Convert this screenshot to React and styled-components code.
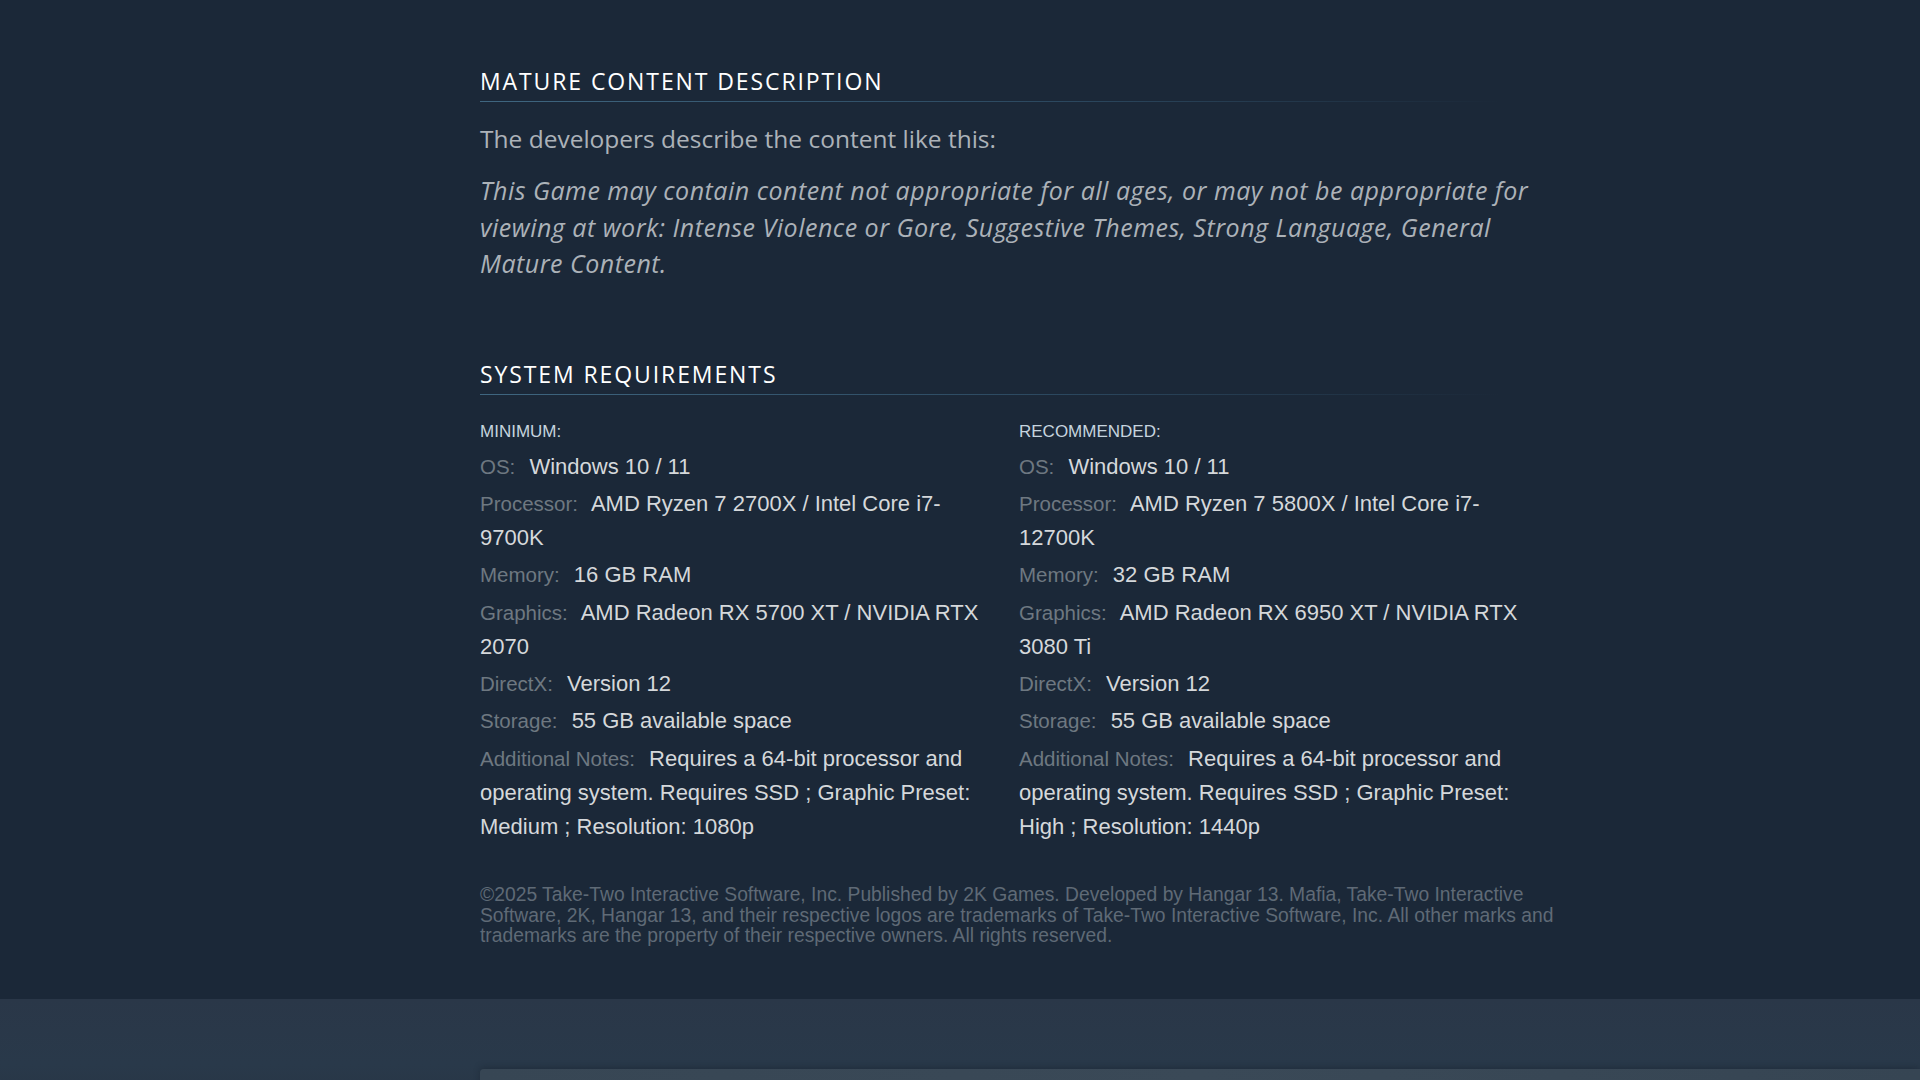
import React from 'react';
import styled, { createGlobalStyle } from 'styled-components';

const GlobalStyle = createGlobalStyle`
	html, body {
		margin: 0;
		padding: 0;
		background: #1b2838;
	}
	body {
		font-family: 'Open Sans', 'Liberation Sans', sans-serif;
	}
`;

// 페이지 전체
const Page = styled.div`
	min-height: 1080px;
	display: flex;
	flex-direction: column;
	background: #1b2838;
	overflow: hidden;
`;

// 본문 컬럼
const Column = styled.div`
	width: 1075px;
	padding: 66px 0 0 480px;
`;

const Section = styled.section`
	margin-bottom: ${(p) => p.$gap || 0}px;
`;

// 섹션 제목 + 그래디언트 밑줄
const SectionTitle = styled.h2`
	margin: 0;
	font-family: 'Open Sans', sans-serif;
	font-weight: 400;
	font-size: 23px;
	line-height: 30px;
	letter-spacing: 1.9px;
	text-transform: uppercase;
	color: #ffffff;
	padding-bottom: 6px;
	position: relative;

	&::after {
		content: '';
		position: absolute;
		left: 0;
		right: 0;
		bottom: 0;
		height: 1px;
		background: linear-gradient(to right, #3f6680 0%, #2b475e 55%, rgba(43, 71, 94, 0) 95%);
	}
`;

const Intro = styled.p`
	margin: 19px 0 0;
	font-size: 24.5px;
	line-height: 36px;
	color: #acb2b8;
`;

const Description = styled.p`
	margin: 15px 0 0;
	font-size: 25px;
	font-style: italic;
	letter-spacing: 0.5px;
	line-height: 36.5px;
	color: #acb2b8;
`;

// 사양 2단 그리드
const ReqGrid = styled.div`
	display: grid;
	grid-template-columns: 510px 510px;
	column-gap: 29px;
	margin-top: 26px;
`;

const ReqTitle = styled.div`
	font-family: 'Liberation Sans', Arial, sans-serif;
	font-size: 17px;
	line-height: 22px;
	text-transform: uppercase;
	color: #c6d4df;
	margin-bottom: 7px;
`;

const ReqList = styled.ul`
	list-style: none;
	margin: 0;
	padding: 0;
`;

const ReqItem = styled.li`
	font-family: 'Liberation Sans', Arial, sans-serif;
	font-size: 22px;
	line-height: 34.25px;
	margin-bottom: 3px;
`;

const ReqLabel = styled.span`
	font-size: 20.5px;
	color: #6e7881;
	margin-right: 8px;
`;

const ReqValue = styled.span`
	color: #d5d8db;
`;

const Copyright = styled.div`
	margin-top: 38px;
	font-family: 'Liberation Sans', Arial, sans-serif;
	font-size: 19.3px;
	line-height: 20.5px;
	color: #5f6a76;
`;

// 하단 흐린 영역
const BottomBand = styled.div`
	margin-top: 52px;
	flex: 1;
	background: linear-gradient(to bottom, #2a3748 0%, #29394a 60%, #273443 100%);
	padding: 70px 0 0 480px;
`;

const BandCard = styled.div`
	height: 40px;
	border-radius: 4px 0 0 0;
	background: linear-gradient(to right, #374654, #3a4957 50%, #364553);
	box-shadow: 0 -2px 6px rgba(20, 30, 40, 0.35);
`;

const minimum = [
	['OS:', 'Windows 10 / 11'],
	['Processor:', 'AMD Ryzen 7 2700X / Intel Core i7-9700K'],
	['Memory:', '16 GB RAM'],
	['Graphics:', 'AMD Radeon RX 5700 XT / NVIDIA RTX 2070'],
	['DirectX:', 'Version 12'],
	['Storage:', '55 GB available space'],
	[
		'Additional Notes:',
		'Requires a 64-bit processor and operating system. Requires SSD ; Graphic Preset: Medium ; Resolution: 1080p',
	],
];

const recommended = [
	['OS:', 'Windows 10 / 11'],
	['Processor:', 'AMD Ryzen 7 5800X / Intel Core i7-12700K'],
	['Memory:', '32 GB RAM'],
	['Graphics:', 'AMD Radeon RX 6950 XT / NVIDIA RTX 3080 Ti'],
	['DirectX:', 'Version 12'],
	['Storage:', '55 GB available space'],
	[
		'Additional Notes:',
		'Requires a 64-bit processor and operating system. Requires SSD ; Graphic Preset: High ; Resolution: 1440p',
	],
];

const ReqColumn = ({ title, rows }) => (
	<div>
		<ReqTitle>{title}</ReqTitle>
		<ReqList>
			{rows.map(([label, value]) => (
				<ReqItem key={label}>
					<ReqLabel>{label}</ReqLabel> <ReqValue>{value}</ReqValue>
				</ReqItem>
			))}
		</ReqList>
	</div>
);

const App = () => {
	return (
		<Page>
			<GlobalStyle />
			<Column>
				<Section $gap={77}>
					<SectionTitle>Mature Content Description</SectionTitle>
					<Intro>The developers describe the content like this:</Intro>
					<Description>
						This Game may contain content not appropriate for all ages, or may not be appropriate
						for viewing at work: Intense Violence or Gore, Suggestive Themes, Strong Language,
						General Mature Content.
					</Description>
				</Section>

				<Section>
					<SectionTitle>System Requirements</SectionTitle>
					<ReqGrid>
						<ReqColumn title="Minimum:" rows={minimum} />
						<ReqColumn title="Recommended:" rows={recommended} />
					</ReqGrid>
				</Section>

				<Copyright>
					©2025 Take-Two Interactive Software, Inc. Published by 2K Games. Developed by Hangar 13.
					Mafia, Take-Two Interactive Software, 2K, Hangar 13, and their respective logos are
					trademarks of Take-Two Interactive Software, Inc. All other marks and trademarks are the
					property of their respective owners. All rights reserved.
				</Copyright>
			</Column>
			<BottomBand>
				<BandCard />
			</BottomBand>
		</Page>
	);
};

export default App;
